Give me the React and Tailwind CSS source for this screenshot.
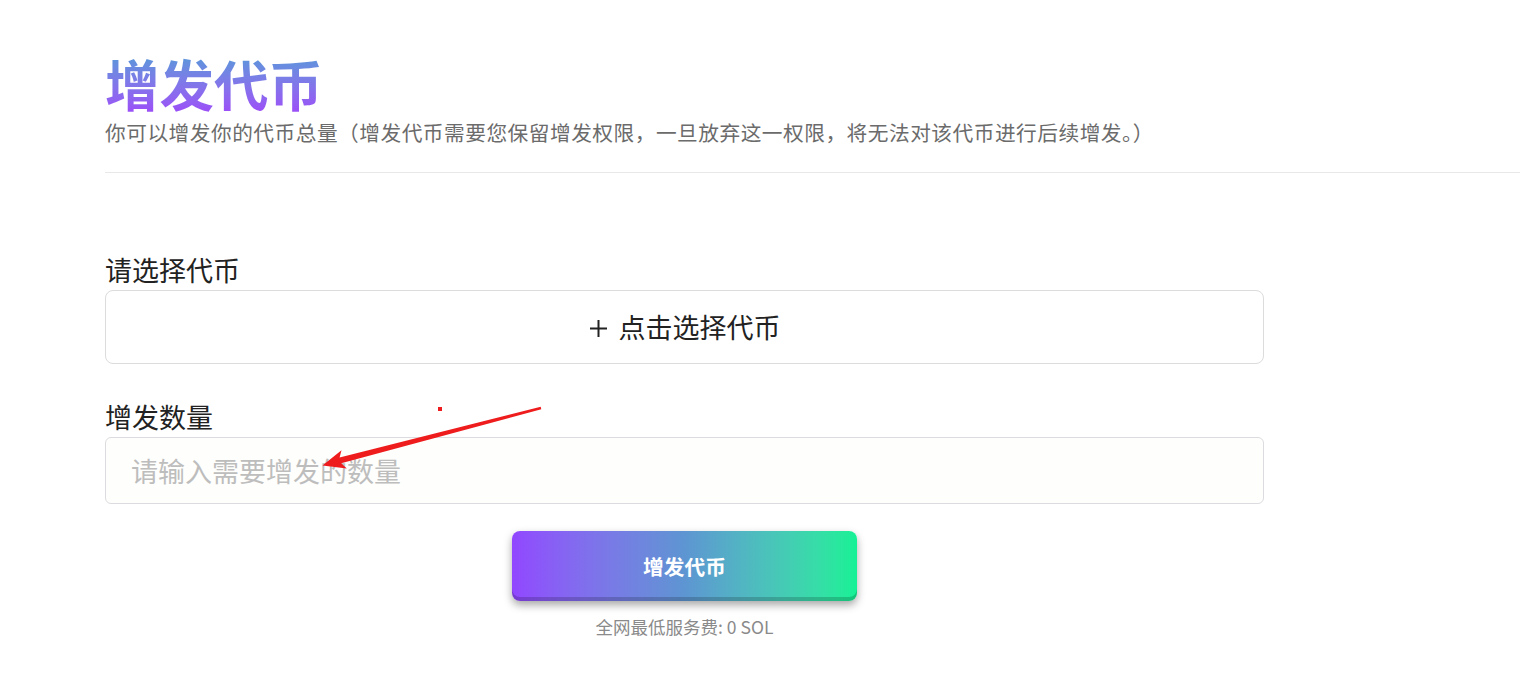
import { useState } from "react";

const cjk = { fontFamily: '"Noto Sans CJK SC", "Noto Sans", sans-serif' };

function RedArrow() {
  // annotation drawn over the screenshot
  return (
    <svg
      className="absolute left-0 top-0 pointer-events-none"
      width="1520"
      height="684"
      viewBox="0 0 1520 684"
    >
      <rect x="438" y="407" width="4" height="4" fill="#ee1c1c" />
      <polygon
        points="540.7,406.8 339.6,457.5 341.5,450.2 322.5,465.5 346.8,468.4 341.2,463.3 541.3,409.2"
        fill="#ee1c1c"
      />
    </svg>
  );
}

export default function App() {
  const [amount, setAmount] = useState("");

  return (
    <div className="relative w-[1520px] h-[684px] overflow-hidden bg-white" style={cjk}>
      <div className="pl-[105px]">
        {/* HEADER */}
        <h1 className="mt-[52px] text-[54.5px] leading-[62px] font-bold bg-gradient-to-b from-[#4f9ad8] to-[#9c4af8] bg-clip-text text-transparent w-fit">
          增发代币
        </h1>
        <p className="mt-[6px] text-[20.7px] tracking-[0.5px] leading-[24px] text-[#6b6b6b]">
          你可以增发你的代币总量（增发代币需要您保留增发权限，一旦放弃这一权限，将无法对该代币进行后续增发。）
        </p>
        <div className="mt-[28px] h-px bg-[#e8e8e8]" />

        {/* FORM */}
        <div className="w-[1159px]">
          <label className="block mt-[81px] text-[27px] leading-[32px] text-[#222]">请选择代币</label>
          <button
            type="button"
            className="mt-[4px] w-full h-[74px] rounded-lg border border-[#dcdcdc] bg-white flex items-center justify-center text-[27px] text-[#222]"
          >
            <svg width="19" height="19" viewBox="0 0 19 19" className="mr-[11px] mt-[2px]">
              <path d="M9.5 1v17M1 9.5h17" stroke="#222" strokeWidth="2" />
            </svg>
            点击选择代币
          </button>

          <label className="block mt-[37px] text-[27px] leading-[32px] text-[#222]">增发数量</label>
          <input
            value={amount}
            onChange={(e) => setAmount(e.target.value)}
            placeholder="请输入需要增发的数量"
            className="mt-[4px] w-full h-[67px] rounded-md border border-[#dcdce0] bg-[#fefefc] px-[25px] text-[27px] text-[#222] placeholder:text-[#bdbdbd] outline-none"
          />

          <div className="flex flex-col items-center">
            <button
              type="button"
              className="mt-[27px] w-[345px] h-[70px] pt-[2px] rounded-lg bg-gradient-to-r from-[#9146ff] via-[#5d95d2] to-[#14f195] text-white font-bold text-[20.7px] shadow-[inset_0_-4px_0_rgba(0,0,0,0.18),0_4px_8px_rgba(0,0,0,0.35)]"
            >
              增发代币
            </button>
            <p className="mt-[16px] text-[17.5px] leading-[20px] text-[#8a8a8a]">全网最低服务费: 0 SOL</p>
          </div>
        </div>
      </div>
      <RedArrow />
    </div>
  );
}
